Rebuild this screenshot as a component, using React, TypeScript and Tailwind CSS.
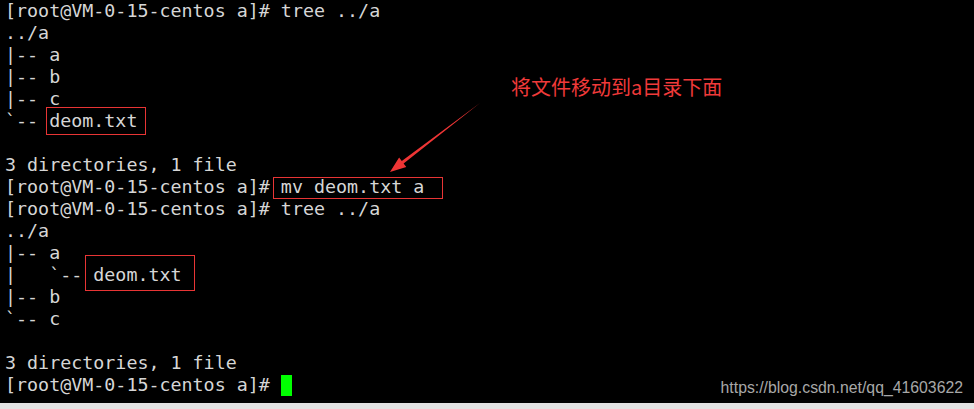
const lines = [
  "[root@VM-0-15-centos a]# tree ../a",
  "../a",
  "|-- a",
  "|-- b",
  "|-- c",
  "`-- deom.txt",
  "",
  "3 directories, 1 file",
  "[root@VM-0-15-centos a]# mv deom.txt a",
  "[root@VM-0-15-centos a]# tree ../a",
  "../a",
  "|-- a",
  "|   `-- deom.txt",
  "|-- b",
  "`-- c",
  "",
  "3 directories, 1 file",
];

const Arrow = () => (
  <svg className="absolute left-0 top-0" width="974" height="403" viewBox="0 0 974 403">
    <polygon
      points="480,103 403.6,163.5 406.3,167.1 390,172 399.1,157.5 401.8,161.1"
      fill="#ee3535"
    />
  </svg>
);

export default function App() {
  return (
    <div className="flex h-[409px] w-[974px] flex-col bg-[#e2e2e2]">
      <div className="relative h-[403px] overflow-hidden bg-black">
        <pre className="pl-[5px] font-['DejaVu_Sans_Mono',monospace] text-[18.34px] leading-[22px] text-[#d6d6d6]">
          {lines.map((l, i) => (
            <div key={i} className="h-[22px] whitespace-pre">
              {l}
            </div>
          ))}
          <div className="flex h-[22px] items-center whitespace-pre">
            <span>[root@VM-0-15-centos a]# </span>
            <span className="h-[21px] w-[11px] bg-[#00ff00]" />
          </div>
        </pre>

        {/* annotations */}
        <div className="absolute left-[46px] top-[107px] h-[28px] w-[100px] border border-[#e83535]" />
        <div className="absolute left-[273px] top-[177px] h-[22px] w-[170px] border border-[#e83535]" />
        <div className="absolute left-[85px] top-[255px] h-[36px] w-[110px] border border-[#e83535]" />
        <Arrow />
        <div className="absolute left-[511px] top-[75px] font-['Noto_Sans_CJK_SC',sans-serif] text-[20px] leading-[24px] text-[#f03a3a]">
          将文件移动到a目录下面
        </div>
        <div className="absolute right-[11px] top-[378px] font-['Liberation_Sans',sans-serif] text-[15.8px] leading-[20px] text-[#a8a8a8]">
          https://blog.csdn.net/qq_41603622
        </div>
      </div>
      <div className="flex-1" />
    </div>
  );
}
